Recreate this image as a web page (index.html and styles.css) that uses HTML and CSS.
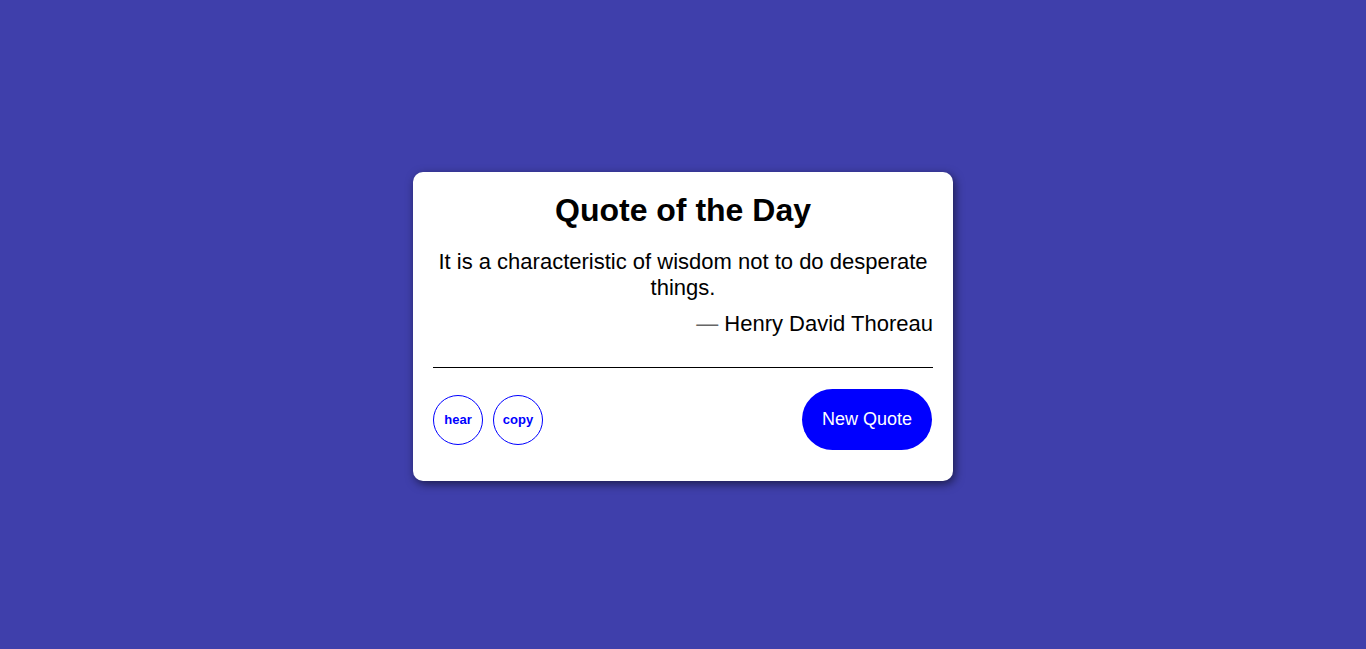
FILE: index.html
```html
<!DOCTYPE html>
<html lang="en">
<head>
<meta charset="utf-8">
<title>Quote of the Day</title>
<link rel="stylesheet" href="styles.css">
</head>
<body>
  <main class="card">
    <h1 class="title">Quote of the Day</h1>
    <p class="quote">It is a characteristic of wisdom not to do desperate things.</p>
    <p class="author"><span class="dash">—</span> Henry David Thoreau</p>
    <div class="divider"></div>
    <div class="actions">
      <div class="tools">
        <button class="circle">hear</button>
        <button class="circle">copy</button>
      </div>
      <button class="new-quote">New Quote</button>
    </div>
  </main>
</body>
</html>
```
FILE: styles.css
```css
* { box-sizing: border-box; }
html, body { margin: 0; padding: 0; }
body {
  background: #3f3fab;
  font-family: "Liberation Sans", Arial, sans-serif;
  min-height: 100vh;
  display: flex;
  align-items: center;
  justify-content: center;
}
.card {
  width: 540px;
  background: #fff;
  border-radius: 10px;
  padding: 20px 20px 31px;
  box-shadow: 2px 3px 10px rgba(0, 0, 0, 0.55);
  margin-top: 4px;
}
.title {
  margin: 0 0 20px;
  font-size: 32px;
  line-height: 37px;
  font-weight: bold;
  text-align: center;
  color: #000;
}
.quote {
  margin: 0 0 10px;
  font-size: 22px;
  line-height: 26px;
  text-align: center;
  color: #000;
}
.author {
  margin: 0;
  font-size: 22px;
  line-height: 26px;
  text-align: right;
  color: #000;
}
.dash { color: #666; }
.divider {
  margin-top: 30px;
  height: 1px;
  background: #000;
}
.actions {
  display: flex;
  align-items: center;
  justify-content: space-between;
  padding-top: 21px;
}
.tools {
  display: flex;
  gap: 10px;
}
.circle {
  width: 50px;
  height: 50px;
  border-radius: 50%;
  border: 1px solid #00f;
  background: #fff;
  color: #00f;
  font-family: "Liberation Sans", Arial, sans-serif;
  font-weight: bold;
  font-size: 13px;
  padding: 0;
}
.new-quote {
  width: 130px;
  height: 61px;
  margin-right: 1px;
  border: none;
  border-radius: 31px;
  background: #00f;
  color: #fff;
  font-family: "Liberation Sans", Arial, sans-serif;
  font-size: 18px;
  padding: 0;
}
```
